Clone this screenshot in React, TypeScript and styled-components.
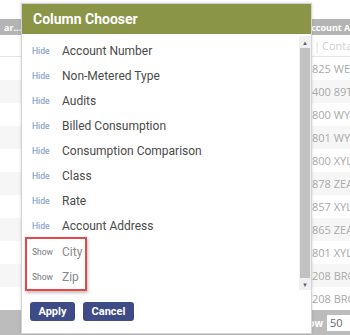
import styled, { createGlobalStyle } from 'styled-components'

const GlobalStyle = createGlobalStyle`
  html, body {
    margin: 0;
    padding: 0;
    background: #ffffff;
  }
  body {
    width: 350px;
    height: 335px;
    overflow: hidden;
  }
`

const Page = styled.div`
  position: relative;
  width: 350px;
  height: 335px;
  overflow: hidden;
  display: flex;
  flex-direction: column;
  font-family: "Open Sans", "Liberation Sans", sans-serif;
`

const Toolbar = styled.div`
  height: 19px;
`

const HeaderRow = styled.div`
  display: grid;
  grid-template-columns: 22px 1fr 46px;
  height: 16px;
  background: #b4b4b4;
  color: #ffffff;
  font-weight: 700;
  font-size: 9px;
  align-items: center;
  white-space: nowrap;
  overflow: hidden;
`

const Cell = styled.div<{ $pad?: number }>`
  overflow: hidden;
  white-space: nowrap;
  padding-left: ${p => p.$pad ?? 4}px;
`

const FilterRow = styled.div`
  display: grid;
  grid-template-columns: 22px 1fr 46px;
  height: 21px;
  border-bottom: 1px solid #e4e4e4;
  align-items: center;
  font-size: 11px;
  color: #cfcfcf;
`

const FilterCell = styled.div`
  display: flex;
  align-items: center;
  gap: 2px;
  padding-left: 8px;
  white-space: nowrap;
  overflow: hidden;
`

const Divider = styled.span`
  color: #d8d8d8;
`

const DataRow = styled.div<{ $striped: boolean }>`
  display: grid;
  grid-template-columns: 22px 1fr 46px;
  height: 23px;
  align-items: center;
  background: ${p => (p.$striped ? '#f6f6f6' : '#ffffff')};
  color: #a9a9a9;
  font-size: 11px;
`

const Footer = styled.div`
  flex: 1;
  background: #bcbcbc;
  display: flex;
  justify-content: flex-end;
  align-items: center;
  gap: 4px;
  color: #ffffff;
  font-size: 10px;
  font-weight: 700;
`

const PageSize = styled.div`
  width: 22px;
  height: 16px;
  background: #ffffff;
  color: #666;
  font-weight: 400;
  font-size: 11px;
  line-height: 16px;
  padding-left: 3px;
  margin-right: -2px;
`

const Modal = styled.div`
  position: absolute;
  left: 21px;
  top: 3px;
  width: 289px;
  height: 329px;
  background: #ffffff;
  border: 1px solid #d4d4d4;
  box-shadow: 0 0 3px rgba(0, 0, 0, 0.15);
  display: flex;
  flex-direction: column;
  font-family: Roboto, "Liberation Sans", sans-serif;
`

const ModalHeader = styled.div`
  height: 30px;
  background: #8a9548;
  color: #ffffff;
  font-weight: 700;
  font-size: 14px;
  display: flex;
  align-items: center;
  padding-left: 11px;
`

const ListArea = styled.div`
  display: flex;
  height: 254px;
  margin-top: 2px;
`

const List = styled.div`
  flex: 1;
  padding-top: 2px;
  padding-left: 10px;
`

const Item = styled.div`
  display: flex;
  align-items: center;
  height: 25px;
`

const Toggle = styled.span<{ $shown: boolean }>`
  width: 30px;
  font-size: 8.5px;
  color: ${p => (p.$shown ? '#7a7a7a' : '#6a8cc6')};
`

const Label = styled.span<{ $shown: boolean }>`
  font-size: 12px;
  color: ${p => (p.$shown ? '#8a8a8a' : '#4a4a4a')};
`

const Highlight = styled.div`
  display: inline-flex;
  flex-direction: column;
  margin-left: -7px;
  margin-top: -1px;
  padding-left: 5px;
  padding-right: 3px;
  border: 2px solid #e8474a;
  box-shadow: 1px 2px 3px rgba(0, 0, 0, 0.25);
`

const Scrollbar = styled.div`
  width: 12px;
  background: #f1f1f1;
  display: flex;
  flex-direction: column;
  align-items: center;
`

const Arrow = styled.div`
  height: 12px;
  display: flex;
  align-items: center;
  justify-content: center;
  color: #606060;
  font-size: 6px;
`

const Thumb = styled.div`
  flex: 1;
  width: 10px;
  background: #c1c1c1;
`

const Actions = styled.div`
  display: flex;
  gap: 8px;
  padding-left: 8px;
  margin-top: 12px;
`

const Button = styled.button<{ $width: number }>`
  width: ${p => p.$width}px;
  height: 19px;
  border: none;
  border-radius: 3px;
  background: #3e4b86;
  color: #ffffff;
  font-family: Roboto, "Liberation Sans", sans-serif;
  font-weight: 700;
  font-size: 11px;
  padding: 0;
`

const Grip = styled.div`
  position: absolute;
  right: 0;
  bottom: 0;
  width: 5px;
  height: 5px;
`

const columns = [
  { name: 'Account Number', shown: false },
  { name: 'Non-Metered Type', shown: false },
  { name: 'Audits', shown: false },
  { name: 'Billed Consumption', shown: false },
  { name: 'Consumption Comparison', shown: false },
  { name: 'Class', shown: false },
  { name: 'Rate', shown: false },
  { name: 'Account Address', shown: false },
]

const hidden = [
  { name: 'City', shown: true },
  { name: 'Zip', shown: true },
]

const addresses = [
  '825 WEST',
  '400 89TH',
  '800 WYOM',
  '801 WYOM',
  '800 XYLO',
  '878 ZEAL',
  '857 XYLO',
  '865 ZEAL',
  '801 XYLO',
  '208 BROA',
  '208 BROA',
]

function FunnelIcon() {
  return (
    <svg width="8" height="8" viewBox="0 0 8 8">
      <path d="M0.5 0.5 H7.5 L4.8 3.8 V7.2 L3.2 6.3 V3.8 Z" fill="none" stroke="#bdbdbd" strokeWidth="0.8" />
    </svg>
  )
}

function ColumnRow({ name, shown }: { name: string; shown: boolean }) {
  return (
    <Item>
      <Toggle $shown={shown}>{shown ? 'Show' : 'Hide'}</Toggle>
      <Label $shown={shown}>{name}</Label>
    </Item>
  )
}

export default function App() {
  return (
    <>
      <GlobalStyle />
      <Page>
        <Toolbar />
        <HeaderRow>
          <Cell>ar...</Cell>
          <div />
          <Cell $pad={1}>Account Address</Cell>
        </HeaderRow>
        <FilterRow>
          <div />
          <div />
          <FilterCell>
            <FunnelIcon />
            <Divider>|</Divider>
            <span>Contains</span>
          </FilterCell>
        </FilterRow>
        {addresses.map((a, i) => (
          <DataRow key={i} $striped={i % 2 === 1}>
            <div />
            <div />
            <Cell $pad={8}>{a}</Cell>
          </DataRow>
        ))}
        <Footer>
          <span>Show</span>
          <PageSize>50</PageSize>
        </Footer>

        <Modal>
          <ModalHeader>Column Chooser</ModalHeader>
          <ListArea>
            <List>
              {columns.map(c => (
                <ColumnRow key={c.name} name={c.name} shown={c.shown} />
              ))}
              <Highlight>
                {hidden.map(c => (
                  <ColumnRow key={c.name} name={c.name} shown={c.shown} />
                ))}
              </Highlight>
            </List>
            <Scrollbar>
              <Arrow>▲</Arrow>
              <Thumb />
              <Arrow>▼</Arrow>
            </Scrollbar>
          </ListArea>
          <Actions>
            <Button $width={45}>Apply</Button>
            <Button $width={51}>Cancel</Button>
          </Actions>
          <Grip>
            <svg width="5" height="5" viewBox="0 0 5 5">
              <path d="M5 1 L1 5 M5 3 L3 5" stroke="#999" strokeWidth="0.7" />
            </svg>
          </Grip>
        </Modal>
      </Page>
    </>
  )
}
